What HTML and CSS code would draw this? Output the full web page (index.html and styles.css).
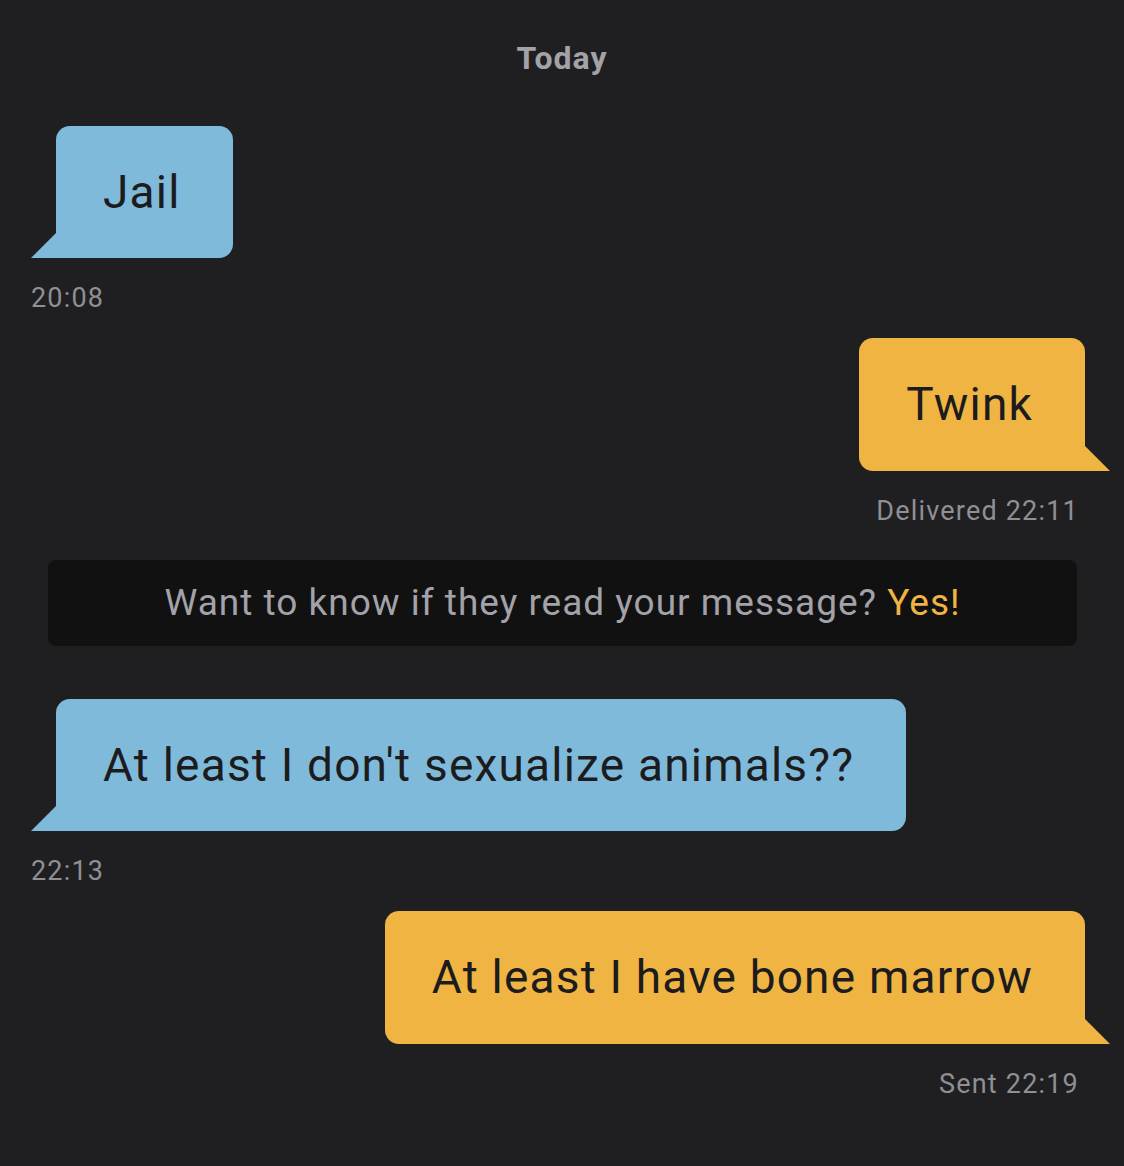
FILE: index.html
```html
<!DOCTYPE html>
<html lang="en">
<head>
  <meta charset="UTF-8" />
  <meta name="viewport" content="width=device-width, initial-scale=1.0" />
  <title>Chat</title>
  <link rel="stylesheet" href="styles.css">
</head>
<body>
  <div class="chat">
    <div class="day">Today</div>

    <div class="msg in">
      <div class="bubble">Jail</div>
      <div class="meta">20:08</div>
    </div>

    <div class="msg out">
      <div class="bubble">Twink</div>
      <div class="meta">Delivered 22:11</div>
    </div>

    <div class="promo">Want to know if they read your message? <span class="yes">Yes!</span></div>

    <div class="msg in">
      <div class="bubble">At least I don't sexualize animals??</div>
      <div class="meta">22:13</div>
    </div>

    <div class="msg out">
      <div class="bubble">At least I have bone marrow</div>
      <div class="meta">Sent 22:19</div>
    </div>
  </div>
</body>
</html>
```

FILE: styles.css
```css
:root {
  --bg: #1f1f21;
  --banner-bg: #111112;
  --blue: #80badb;
  --yellow: #f0b443;
  --ink: #1c1c1e;
  --muted: #8f8f95;
  --grey-text: #a3a2a9;
}

body {
  margin: 0;
  background: var(--bg);
  font-family: Roboto, "Liberation Sans", sans-serif;
  min-height: 100vh;
}

.chat {
  display: flex;
  flex-direction: column;
  padding: 40px 14px 40px 31px;
}

.day {
  margin: 0 -14px 50px -31px;
  text-align: center;
  font-size: 32px;
  font-weight: 700;
  line-height: 36px;
  letter-spacing: 1px;
  color: var(--grey-text);
}

.msg {
  display: flex;
  flex-direction: column;
  margin-bottom: 25px;
}

.msg.in {
  align-items: flex-start;
  padding-left: 25px;
}

.msg.out {
  align-items: flex-end;
  padding-right: 25px;
}

.bubble {
  position: relative;
  font-size: 46px;
  line-height: 56px;
  padding: 38px 52px 38px 47px;
  color: var(--ink);
  letter-spacing: 1.2px;
}

.bubble::before {
  content: "";
  position: absolute;
  bottom: 0;
  width: 25px;
  height: 25px;
}

.in .bubble {
  background: var(--blue);
  border-radius: 14px 14px 14px 0;
}

.in .bubble::before {
  left: -25px;
  background: var(--blue);
  clip-path: polygon(100% 0, 100% 100%, 0 100%);
}

.out .bubble {
  background: var(--yellow);
  border-radius: 14px 14px 0 14px;
  padding-bottom: 39px;
}

.out .bubble::before {
  right: -25px;
  background: var(--yellow);
  clip-path: polygon(0 0, 100% 100%, 0 100%);
}

.meta {
  margin-top: 25px;
  font-size: 27px;
  line-height: 30px;
  color: var(--muted);
  letter-spacing: 1.2px;
}

.in .meta {
  margin-left: -25px;
}

.out .meta {
  margin-right: 6px;
}

.promo {
  margin: 9px 33px 53px 17px;
  background: var(--banner-bg);
  border-radius: 8px;
  height: 86px;
  line-height: 86px;
  text-align: center;
  font-size: 37px;
  color: var(--grey-text);
  letter-spacing: 1px;
}

.promo .yes {
  color: var(--yellow);
}
```
